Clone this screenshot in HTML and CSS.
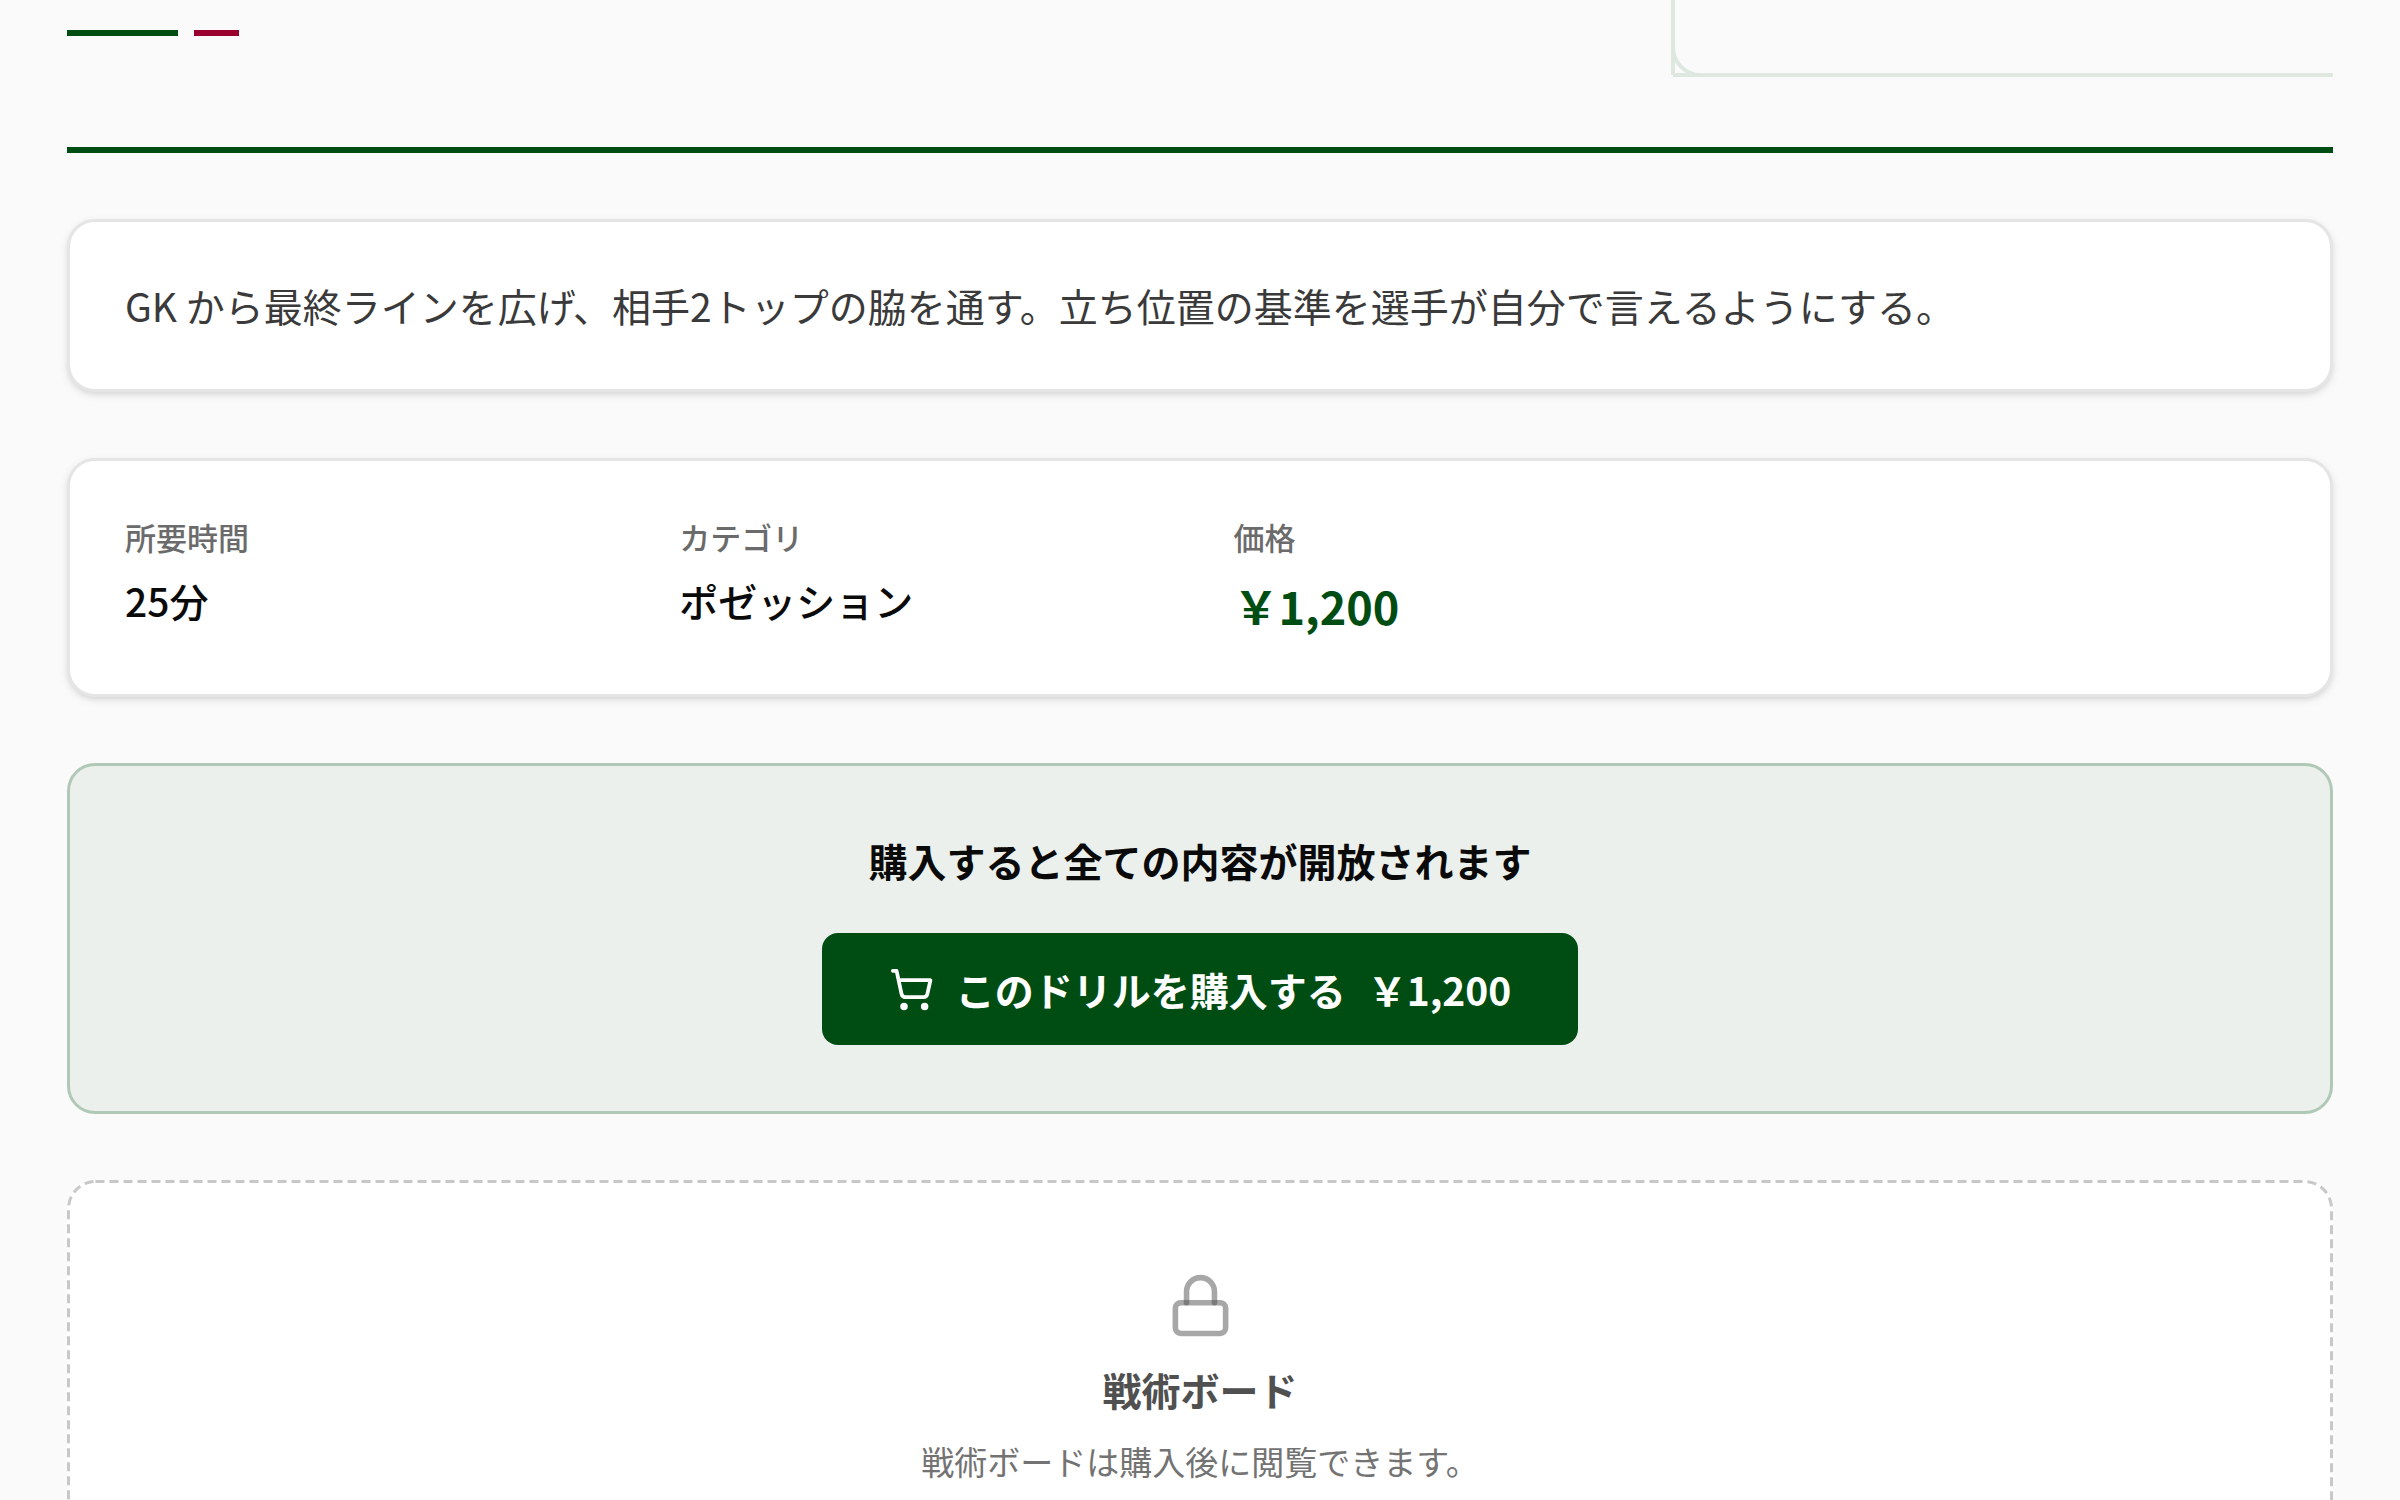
FILE: index.html
```html
<!DOCTYPE html>
<html lang="ja">
<head>
<meta charset="utf-8">
<title>ドリル詳細</title>
<link rel="stylesheet" href="styles.css">
</head>
<body>
<main class="page">
  <header class="hero">
    <div class="accents"><span class="accent accent-long"></span><span class="accent accent-short"></span></div>
    <svg class="pitch" viewBox="0 0 662 77" fill="none" stroke="#dee8e0" stroke-width="4" aria-hidden="true">
      <path d="M2 0V75M2 75H662M2 47A28 28 0 0 0 30 75"/>
    </svg>
  </header>

  <section class="card summary">
    <p>GK から最終ラインを広げ、相手2トップの脇を通す。立ち位置の基準を選手が自分で言えるようにする。</p>
  </section>

  <dl class="card facts">
    <div><dt>所要時間</dt><dd>25分</dd></div>
    <div><dt>カテゴリ</dt><dd>ポゼッション</dd></div>
    <div><dt>価格</dt><dd class="price">￥1,200</dd></div>
  </dl>

  <section class="offer">
    <h2>購入すると全ての内容が開放されます</h2>
    <button type="button" class="buy">
      <svg class="cart" viewBox="0 0 24 24" fill="none" stroke="currentColor" stroke-width="2" stroke-linecap="round" stroke-linejoin="round" aria-hidden="true">
        <circle cx="8" cy="21" r="1"/>
        <circle cx="19" cy="21" r="1"/>
        <path d="M2.05 2.05h2l2.66 12.42a2 2 0 0 0 2 1.58h9.78a2 2 0 0 0 1.95-1.57l1.65-7.43H5.12"/>
      </svg>
      <span>このドリルを購入する</span>
      <span>￥1,200</span>
    </button>
  </section>

  <section class="locked">
    <svg class="dashes" aria-hidden="true"><rect class="dash-line" x="1.5" y="1.5" rx="27"/></svg>
    <svg class="lock" viewBox="0 0 24 24" fill="none" stroke="currentColor" stroke-width="2" stroke-linecap="round" stroke-linejoin="round" aria-hidden="true">
      <rect x="3" y="11" width="18" height="11" rx="2"/>
      <path d="M7 11V7a5 5 0 0 1 10 0v4"/>
    </svg>
    <h2>戦術ボード</h2>
    <p>戦術ボードは購入後に閲覧できます。</p>
  </section>
</main>
</body>
</html>
```
FILE: styles.css
```css
* { box-sizing: border-box; }
body {
  margin: 0;
  background: #fafafa;
  color: #0a0a0a;
  font-family: "Noto Sans CJK JP", sans-serif;
  font-size: 39px;
  line-height: 56px;
}
h2, p, dl, dd { margin: 0; }
h2 { font-size: 39px; font-weight: 700; }
.page {
  display: flex;
  flex-direction: column;
  gap: 66px;
  padding: 0 67px 67px;
}
.hero {
  display: flex;
  justify-content: space-between;
  align-items: flex-start;
  padding-bottom: 70px;
  border-bottom: 6px solid #004d14;
}
.accents { display: flex; gap: 16px; padding-top: 30px; }
.accent { height: 6px; }
.accent-long { width: 111px; background: #004d14; }
.accent-short { width: 45px; background: #99002e; }
.pitch { display: block; width: 662px; height: 77px; }
.card {
  padding: 55px;
  background: #fff;
  border: 3px solid #e5e5e5;
  border-radius: 28px;
  box-shadow: 0 3px 8px rgba(0, 0, 0, .1), 0 3px 6px -3px rgba(0, 0, 0, .1);
}
.summary { color: #3a3a3a; line-height: 57px; }
.facts {
  display: grid;
  grid-template-columns: repeat(4, 1fr);
  gap: 67px;
}
.facts dt { margin-bottom: 14px; color: #6b6b6b; font-size: 31px; font-weight: 500; line-height: 42px; }
.facts dd { font-weight: 500; }
.facts .price { color: #004d14; font-size: 45px; font-weight: 700; line-height: 67px; }
.offer {
  display: flex;
  flex-direction: column;
  align-items: center;
  gap: 45px;
  padding: 66px;
  background: #ebf0ec;
  border: 3px solid #b0c8b6;
  border-radius: 28px;
}
.buy {
  display: flex;
  align-items: center;
  gap: 22px;
  height: 112px;
  padding: 0 67px;
  border: 0;
  border-radius: 16px;
  background: #004d14;
  color: #fff;
  font: inherit;
  font-weight: 700;
}
.cart { width: 45px; height: 45px; }
.locked {
  position: relative;
  display: flex;
  flex-direction: column;
  align-items: center;
  padding: 92px;
  background: #fff;
  border-radius: 28px;
  text-align: center;
}
.dashes { position: absolute; inset: 0; width: 100%; height: 100%; }
.dash-line {
  width: calc(100% - 3px);
  height: calc(100% - 3px);
  fill: none;
  stroke: #c8c8c8;
  stroke-width: 3px;
  stroke-dasharray: 9 5;
}
.lock { width: 67px; height: 67px; margin-bottom: 22px; color: rgba(80, 80, 80, .5); }
.locked h2 { color: #505050; }
.locked p { margin-top: 16px; color: #737373; font-size: 33px; }
```
